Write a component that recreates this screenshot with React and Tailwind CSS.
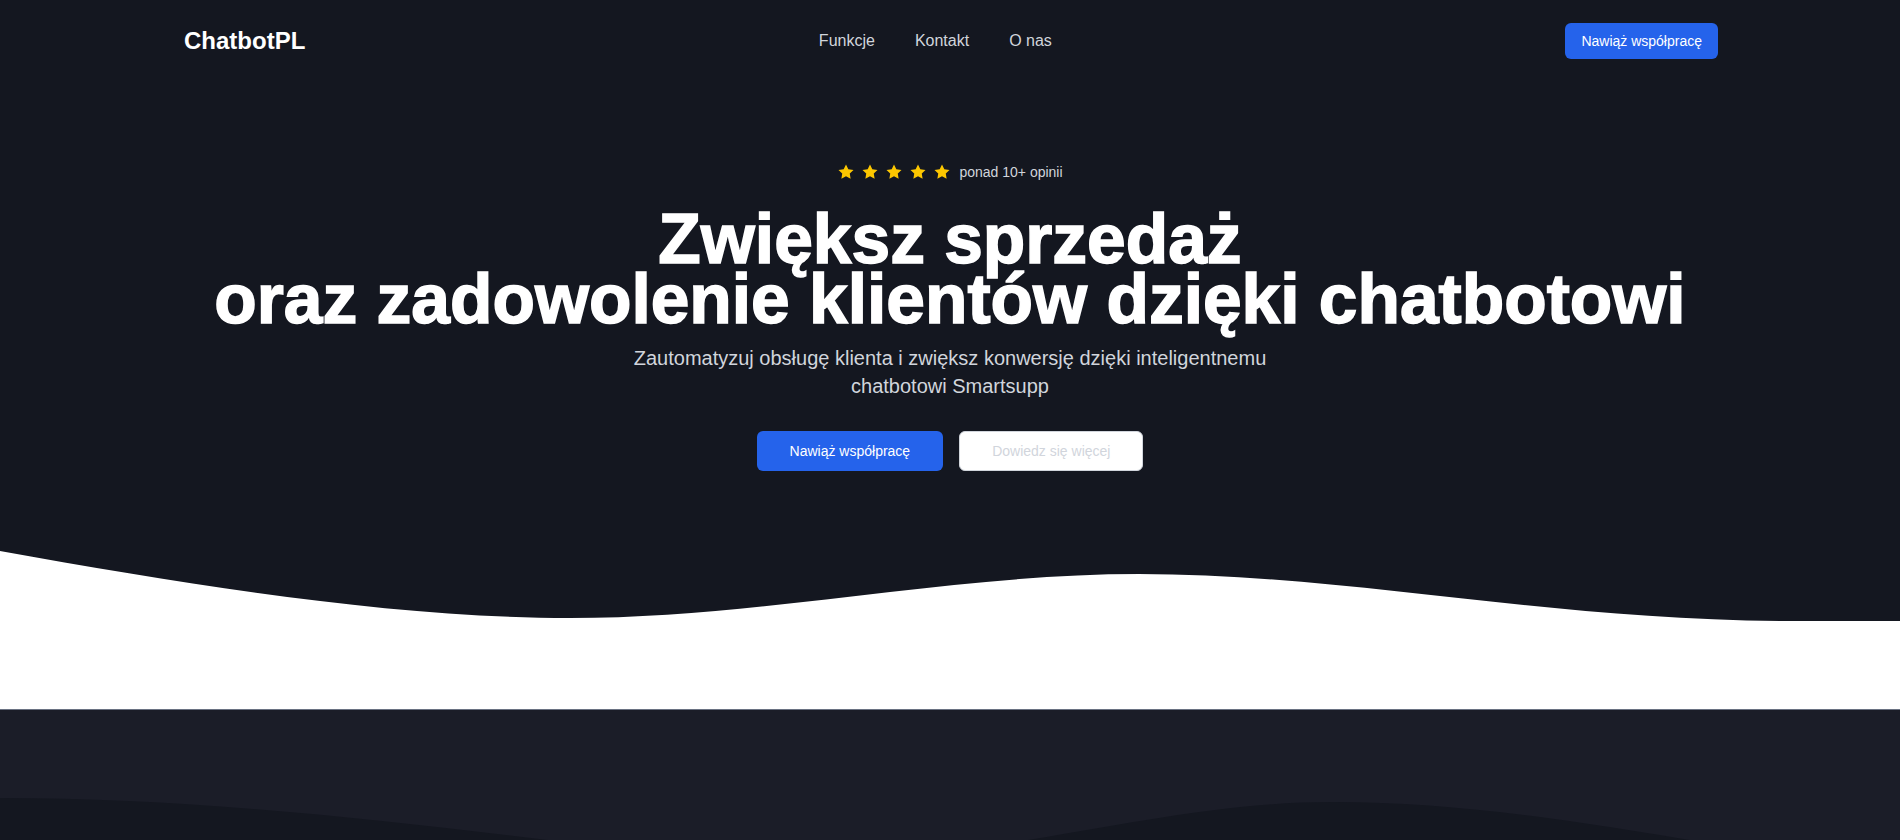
import React from 'react';

const Star = () => (
  <svg viewBox="0 0 24 24" className="h-[18px] w-[18px] fill-yellow-400">
    <polygon points="12,2 15.09,8.26 22,9.27 17,14.14 18.18,21.02 12,17.77 5.82,21.02 7,14.14 2,9.27 8.91,8.26" />
  </svg>
);

const App = () => {
  return (
    <div className="min-h-screen bg-white font-['Liberation_Sans',Arial,sans-serif]">
      <div className="bg-[#141720]">
        <header className="container mx-auto flex items-center justify-between pt-[23px] pb-[23px] pl-[2px]">
          <a href="#" className="text-2xl font-bold text-white">ChatbotPL</a>
          <nav className="flex items-center gap-10 text-base text-gray-300">
            <a href="#">Funkcje</a>
            <a href="#">Kontakt</a>
            <a href="#">O nas</a>
          </nav>
          <button className="h-9 rounded-md bg-[#2563eb] px-4 text-sm font-medium text-white">
            Nawiąż współpracę
          </button>
        </header>

        <section className="flex flex-col items-center px-4 pt-20 pb-[74px] text-center">
          <div className="flex items-center gap-2">
            <div className="flex items-center gap-[6px]">
              <Star />
              <Star />
              <Star />
              <Star />
              <Star />
            </div>
            <span className="text-sm text-gray-300">ponad 10+ opinii</span>
          </div>
          <h1 className="mt-[27px] text-[69.5px] font-bold leading-[60px] text-white [-webkit-text-stroke:1.5px_white]">
            Zwiększ sprzedaż
            <br />
            oraz zadowolenie klientów dzięki chatbotowi
          </h1>
          <p className="mt-[15px] max-w-2xl text-xl text-gray-300">
            Zautomatyzuj obsługę klienta i zwiększ konwersję dzięki inteligentnemu chatbotowi Smartsupp
          </p>
          <div className="mt-[31px] flex items-center gap-4">
            <button className="h-10 rounded-md bg-[#2563eb] px-[33px] text-sm font-medium text-white">
              Nawiąż współpracę
            </button>
            <button className="h-10 rounded-md border border-gray-300 bg-white px-8 text-sm font-medium text-gray-300">
              Dowiedz się więcej
            </button>
          </div>
        </section>
      </div>

      <svg viewBox="0 0 1900 80" preserveAspectRatio="none" className="block h-[80px] w-full">
        <path
          fill="#141720"
          d="M0,0 H1900 V76 H1794 C1550,76 1350,29 1139,29 C950,29 760,73 570,73 C400,73 200,42 0,6 Z"
        />
      </svg>
      <div className="h-[84px] bg-white" />

      <section className="border-t border-gray-500 bg-[#1b1d28]">
        <div className="h-[85px]" />
        <svg viewBox="0 0 1900 100" preserveAspectRatio="none" className="block h-[100px] w-full">
          <path
            fill="#141720"
            d="M0,3 C250,3 500,40 750,70 C1000,70 1150,7 1333,7 C1500,7 1650,40 1900,80 V100 H0 Z"
          />
        </svg>
      </section>
    </div>
  );
};

export default App;
